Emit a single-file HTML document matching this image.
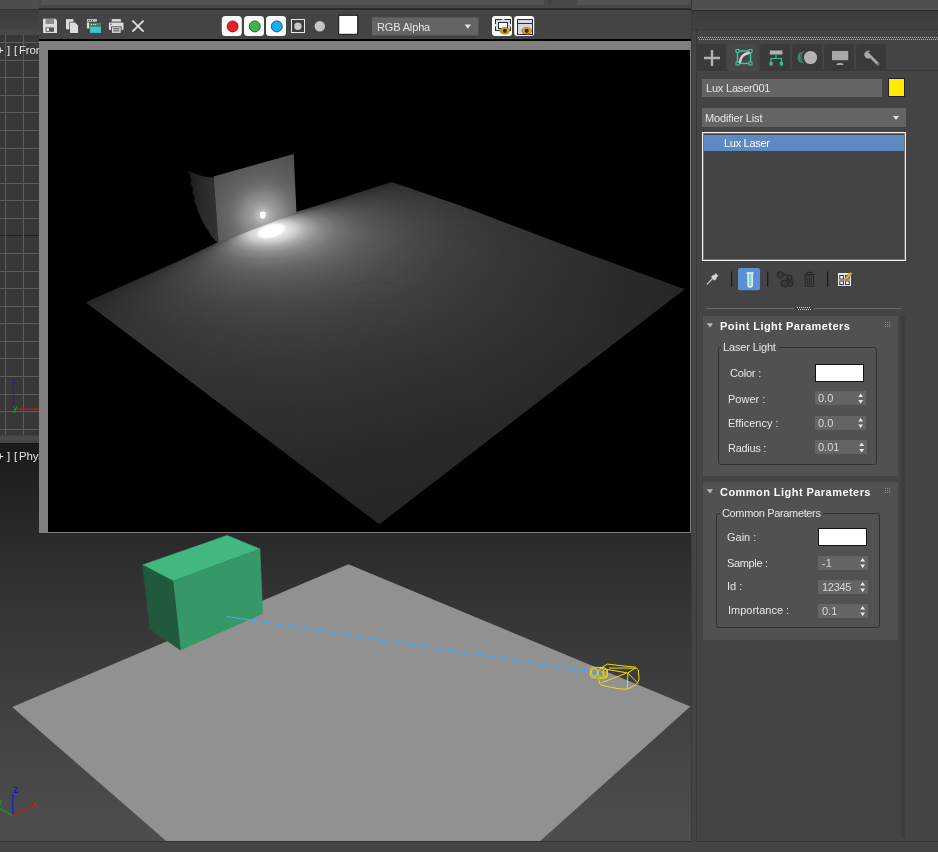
<!DOCTYPE html>
<html>
<head>
<meta charset="utf-8">
<title>Lux Laser</title>
<style>
html,body{margin:0;padding:0;}
body{width:938px;height:852px;overflow:hidden;background:#444444;position:relative;font-family:"Liberation Sans","DejaVu Sans",sans-serif;font-size:11px;color:#e6e6e6;}
.a{position:absolute;}
.t{position:absolute;white-space:nowrap;line-height:14px;height:14px;will-change:transform;}
.fld{position:absolute;background:#646464;}
.sw{position:absolute;background:#fff;border:1px solid #111;box-sizing:border-box;}
.grp{position:absolute;border:1px solid #2f2f2f;border-radius:3px;box-sizing:border-box;}
.roll{position:absolute;background:#515151;}
svg{position:absolute;overflow:visible;}
</style>
</head>
<body>

<!-- ===== top-left strip above front viewport ===== -->
<div class="a" style="left:0;top:0;width:39px;height:9px;background:#4d4d4d"></div>
<div class="a" style="left:0;top:9px;width:39px;height:1px;background:#303030"></div>
<div class="a" style="left:0;top:10px;width:39px;height:19px;background:linear-gradient(#3c3c3c,#434343)"></div>
<div class="a" style="left:0;top:29px;width:39px;height:6px;background:#484848"></div>

<!-- ===== front viewport (grid) ===== -->
<div class="a" style="left:0;top:35px;width:39px;height:400px;background:#383838;overflow:hidden">
<svg style="left:0;top:0" width="39" height="400" viewBox="0 35 39 400">
<g stroke="#5c5c5c" stroke-width="1" shape-rendering="crispEdges">
<line x1="0" y1="42.5" x2="39" y2="42.5"/>
<line x1="0" y1="60.5" x2="39" y2="60.5"/>
<line x1="0" y1="77.5" x2="39" y2="77.5"/>
<line x1="0" y1="95.5" x2="39" y2="95.5"/>
<line x1="0" y1="112.5" x2="39" y2="112.5"/>
<line x1="0" y1="130.5" x2="39" y2="130.5"/>
<line x1="0" y1="148.5" x2="39" y2="148.5"/>
<line x1="0" y1="165.5" x2="39" y2="165.5"/>
<line x1="0" y1="183.5" x2="39" y2="183.5"/>
<line x1="0" y1="200.5" x2="39" y2="200.5"/>
<line x1="0" y1="218.5" x2="39" y2="218.5"/>
<line x1="0" y1="235.5" x2="39" y2="235.5" stroke="#1c1c1c"/>
<line x1="0" y1="253.5" x2="39" y2="253.5"/>
<line x1="0" y1="271.5" x2="39" y2="271.5"/>
<line x1="0" y1="288.5" x2="39" y2="288.5"/>
<line x1="0" y1="306.5" x2="39" y2="306.5"/>
<line x1="0" y1="323.5" x2="39" y2="323.5"/>
<line x1="0" y1="341.5" x2="39" y2="341.5"/>
<line x1="0" y1="358.5" x2="39" y2="358.5"/>
<line x1="0" y1="376.5" x2="39" y2="376.5"/>
<line x1="0" y1="394.5" x2="39" y2="394.5"/>
<line x1="0" y1="411.5" x2="39" y2="411.5"/>
<line x1="0" y1="429.5" x2="39" y2="429.5"/>
<line x1="5.5" y1="35" x2="5.5" y2="435"/>
<line x1="23.5" y1="35" x2="23.5" y2="435"/>
</g>
<!-- axis tripod -->
<line x1="13.5" y1="385" x2="13.5" y2="409" stroke="#1a1ad0" stroke-width="1.2"/>
<line x1="15" y1="409" x2="39" y2="409" stroke="#c01818" stroke-width="1.2"/>
<text x="11" y="384" font-size="9" fill="#1a1ad0" font-family="Liberation Sans,sans-serif">z</text>
<text x="13" y="411" font-size="9" fill="#20a020" font-family="Liberation Sans,sans-serif">y</text>
</svg>
<div class="t" style="left:-3.2px;top:8.3px;font-size:11.5px;color:#e2e2e2">+</div>
<div class="t" style="left:6.6px;top:8.3px;font-size:11.5px;color:#e2e2e2">]</div>
<div class="t" style="left:13.8px;top:8.3px;font-size:11.5px;color:#e2e2e2">[</div>
<div class="t" style="left:18.6px;top:8.3px;font-size:11.5px;color:#e2e2e2;letter-spacing:-0.2px">Front</div>
</div>
<div class="a" style="left:0;top:435px;width:39px;height:8px;background:#444"></div>
<div class="a" style="left:0;top:437px;width:39px;height:3px;background:#4a4a4a"></div>
<!-- ===== perspective viewport ===== -->
<div class="a" id="persp" style="left:0;top:443px;width:691px;height:398px;background:linear-gradient(#191919 0,#212121 9.3%,#343434 39.4%,#3d3d3d 59.5%,#464646 79.6%,#4d4d4d 97.2%,#4e4e4e 100%);overflow:hidden">
<svg style="left:0;top:0" width="691" height="398" viewBox="0 443 691 398">
  <!-- ground plane -->
  <path d="M12.2 707 L348.4 564.2 L690.3 706.6 L540.2 841 L166.2 841 Z" fill="#919191"/>
  <!-- green box -->
  <path d="M142.5 565 L227.2 535.4 L259.9 549 L172.9 581 Z" fill="#42b87e" stroke="#42b87e" stroke-width="0.6"/>
  <path d="M172.9 581 L259.9 549 L262.7 613.4 L180.4 650 Z" fill="#369767" stroke="#369767" stroke-width="0.6"/>
  <path d="M142.5 565 L172.9 581 L180.4 650 L150 629 Z" fill="#20593c" stroke="#20593c" stroke-width="0.6"/>
  <!-- laser beam -->
  <line x1="226.5" y1="616.5" x2="601" y2="673.2" stroke="#4aa6ee" stroke-width="1.2"/>
  <!-- laser gizmo -->
  <g fill="none" stroke="#ecdc0a" stroke-width="1" stroke-linejoin="round">
    <path d="M600.5 668.3 L607.3 664.1 L622 665.8 L635.4 667.1 L638.4 670 L639 679.9 L636.3 684.5 L627.3 689.2 L619.2 688.8 L607.7 686.7 L600 684.5 L598.8 679.4"/>
    <path d="M600.5 668.3 L627.8 673 L627.3 689.2 M627.8 673 L635.4 668 M627.8 673 L638.4 683.7 M601.3 682.8 L626 673.4 M609 668 L636 668.2"/>
    <path d="M592 667.2 L604 667.6 L607.5 670 L607 677 L603 678.5 L592 677.6 L590.2 675 L590.4 669.5 Z"/>
    <ellipse cx="594.5" cy="672.5" rx="3" ry="4"/>
    <ellipse cx="601" cy="673" rx="3" ry="4.4"/>
    <ellipse cx="605" cy="673" rx="2.2" ry="3.6"/>
  </g>
  <!-- axis tripod -->
  <line x1="12.8" y1="794" x2="12.8" y2="815.6" stroke="#1414d8" stroke-width="1.1"/>
  <line x1="12.8" y1="815.6" x2="32.6" y2="806" stroke="#c41818" stroke-width="1.1"/>
  <line x1="12.8" y1="815.6" x2="0" y2="808.6" stroke="#18a018" stroke-width="1.1"/>
  <text x="13" y="793" font-size="10" font-weight="bold" fill="#1414d8" font-family="Liberation Sans,sans-serif">z</text>
  <text x="31.5" y="808" font-size="10" fill="#cc1414" font-family="Liberation Sans,sans-serif">x</text>
  <text x="-3" y="806" font-size="10" fill="#18a818" font-family="Liberation Sans,sans-serif">y</text>
</svg>
<div class="t" style="left:-3.2px;top:6.2px;font-size:11.5px;color:#e2e2e2">+</div>
<div class="t" style="left:6.6px;top:6.2px;font-size:11.5px;color:#e2e2e2">]</div>
<div class="t" style="left:13.8px;top:6.2px;font-size:11.5px;color:#e2e2e2">[</div>
<div class="t" style="left:19px;top:6.2px;font-size:11.5px;color:#e2e2e2;letter-spacing:-0.15px">Phys</div>
</div>
<div class="a" style="left:0;top:841px;width:938px;height:1px;background:#333"></div>
<!-- ===== render window ===== -->
<div class="a" id="rwin" style="left:39px;top:0;width:652px;height:533px;background:#444">
  <div class="a" style="left:0;top:0;width:652px;height:5px;background:#494949"></div>
  <div class="a" style="left:2px;top:0;width:503px;height:5px;background:#535353"></div>
  <div class="a" style="left:538.5px;top:0;width:111px;height:5px;background:#535353"></div>
  <div class="a" style="left:509px;top:0;width:4px;height:4px;background:#404040;border-radius:0 0 2px 2px"></div>
  <div class="a" style="left:0;top:5px;width:652px;height:3px;background:#484848"></div>
  <div class="a" style="left:0;top:8px;width:652px;height:2px;background:#2b2b2b"></div>
  <div class="a" style="left:0;top:39px;width:652px;height:2px;background:#000"></div>
  <!-- toolbar -->
  <svg style="left:0;top:0" width="652" height="41" viewBox="39 0 652 41">
    <!-- save -->
    <path d="M43 18.8 H55.4 L57 20.4 V32.9 H43 Z" fill="#dcdcdc"/>
    <rect x="45.6" y="18.8" width="8.4" height="5.2" fill="#8e8e8e"/>
    <rect x="45.6" y="27.4" width="8.4" height="4.4" fill="#555"/><rect x="46.6" y="28.2" width="2.4" height="2.8" fill="#f4f4f4"/>
    <!-- copy -->
    <rect x="66" y="19.1" width="7.4" height="10.2" fill="#dcdcdc"/>
    <path d="M69.4 21.8 H75.4 L78.6 25 V33.4 H69.4 Z" fill="#444"/>
    <path d="M70 22.4 H75 L78.1 25.5 V32.9 H70 Z" fill="#dcdcdc"/>
    <!-- clone window -->
    <rect x="86.9" y="19.1" width="10" height="2.6" fill="#c8c8c8"/>
    <g fill="#444"><rect x="88" y="20" width="1" height="1"/><rect x="90" y="20" width="1" height="1"/><rect x="92" y="20" width="1" height="1"/></g>
    <rect x="86.9" y="22.4" width="2.4" height="6" fill="#dcdcdc"/>
    <rect x="89.9" y="22.9" width="11.1" height="3" fill="#5a7a78"/>
    <g fill="#bfeee8"><rect x="91" y="24" width="1" height="1"/><rect x="93" y="24" width="1" height="1"/><rect x="95" y="24" width="1" height="1"/></g>
    <rect x="89.9" y="26.5" width="11.1" height="6.4" fill="#3ec8c0"/>
    <!-- print -->
    <rect x="111.7" y="19.1" width="9.2" height="2.5" fill="#dcdcdc"/>
    <rect x="108.9" y="22.5" width="14.6" height="7.4" rx="1" fill="#dcdcdc"/>
    <rect x="110.4" y="23.6" width="1.2" height="1.2" fill="#444"/>
    <rect x="111" y="26.4" width="10.6" height="7" fill="#444"/>
    <rect x="111.9" y="27.2" width="8.8" height="5.7" fill="#dcdcdc"/>
    <path d="M113.2 28.8 H119.4 M113.2 30.9 H119.4" stroke="#444" stroke-width="1"/>
    <!-- close -->
    <path d="M132.4 20.6 L143.6 31.6 M143.6 20.6 L132.4 31.6" stroke="#dcdcdc" stroke-width="2" fill="none"/>
    <!-- channel toggles -->
    <rect x="221.8" y="16" width="20" height="20" rx="3.5" fill="#fbfbfb"/>
    <circle cx="232.6" cy="26.4" r="5.5" fill="#e61e28" stroke="#5a1a1a" stroke-width="0.8"/>
    <rect x="244" y="16" width="20" height="20" rx="3.5" fill="#fbfbfb"/>
    <circle cx="254.8" cy="26.4" r="5.5" fill="#3cb44a" stroke="#1e4a22" stroke-width="0.8"/>
    <rect x="266" y="16" width="20" height="20" rx="3.5" fill="#fbfbfb"/>
    <circle cx="276.8" cy="26.4" r="5.5" fill="#12aef0" stroke="#153c5c" stroke-width="0.8"/>
    <rect x="291.5" y="19.5" width="13" height="13" fill="#3e3e3e" stroke="#e8e8e8" stroke-width="1"/>
    <circle cx="297.9" cy="26.2" r="3.7" fill="#c6c6c6"/>
    <circle cx="319.8" cy="26.2" r="5.2" fill="#c6c6c6"/>
    <rect x="338.7" y="15.3" width="19" height="19" fill="#fff" stroke="#111" stroke-width="1"/>
    <!-- channel dropdown -->
    <rect x="372" y="17.4" width="106.4" height="18" fill="#646464"/>
    <path d="M464.6 24.6 H471 L467.8 28.8 Z" fill="#e0e0e0"/>
    <!-- toggle ui buttons -->
    <rect x="492" y="16" width="20" height="20" rx="3" fill="#fdfdfd"/>
    <rect x="495.5" y="19.5" width="15" height="11" fill="#d9d9e6" stroke="#262c3a" stroke-width="1"/>
    <rect x="498.5" y="22.5" width="9" height="6" fill="#fff" stroke="#262c3a" stroke-width="1"/>
    <path d="M502 19.5 H504.5 M495.5 24 V26.5 M510.5 24 V26.5" stroke="#d9d9e6" stroke-width="1.2"/>
    <ellipse cx="504.8" cy="30.8" rx="5" ry="3.3" fill="#d9a904" stroke="#8a6a00" stroke-width="0.6"/>
    <circle cx="504.8" cy="30.8" r="2.1" fill="#3a2210"/>
    <rect x="514.2" y="16" width="20" height="20" rx="3" fill="#fdfdfd"/>
    <rect x="517.5" y="19.5" width="15" height="15" fill="#d6d6e4" stroke="#262c3a" stroke-width="1"/>
    <path d="M517.5 23.5 H532.5" stroke="#262c3a" stroke-width="1"/>
    <ellipse cx="526.7" cy="30.8" rx="5" ry="3.3" fill="#d9a904" stroke="#8a6a00" stroke-width="0.6"/>
    <circle cx="526.7" cy="30.8" r="2.1" fill="#3a2210"/>
  </svg>
  <div class="t" style="left:337.6px;top:19.5px;color:#e4e4e4;letter-spacing:-0.15px">RGB Alpha</div>

  <div class="a" style="left:0;top:41px;width:652px;height:492px;background:#808080"></div>
  <div class="a" id="rimg" style="left:9px;top:50px;width:642px;height:482px;background:#000;overflow:hidden">
    <!-- floor: perspective-mapped radial falloff, clipped by curved outline -->
    <div class="a" style="left:0;top:0;width:642px;height:482px;clip-path:path('M37.6 252.2 L132 210.6 L171.5 191.3 L248.5 161.8 L292 148.4 L343.8 132 L412 155.4 L532 200.9 L636.6 239.3 L331.3 474.2 Z')">
      <div class="a" style="left:0;top:0;width:1400px;height:1400px;transform-origin:0 0;transform:matrix3d(0.42694925,-0.074657539,0,0.00034815343, 0.18507038,0.065832112,0,-0.0003309408, 0,0,1,0, -84.674488,254.83329,0,1);background:radial-gradient(circle at 729px 211px,rgba(252,252,252,1) 0px,rgba(248,248,248,1) 14px,rgba(238,238,238,1) 26px,rgba(228,228,228,1) 40px,rgba(220,220,220,1) 50px,rgba(213,213,213,1) 58px,rgba(203,203,203,0.95) 68px,rgba(187,187,187,0.85) 80px,rgba(165,165,165,0.62) 100px,rgba(141,141,141,0.36) 130px,rgba(121,121,121,0.13) 170px,rgba(106,106,106,0) 215px),conic-gradient(from 90deg at 729px 166px,rgba(0,0,0,0.600) 0deg,rgba(0,0,0,0.446) 3deg,rgba(0,0,0,0.363) 6deg,rgba(0,0,0,0.295) 10deg,rgba(0,0,0,0.237) 15deg,rgba(0,0,0,0.178) 22deg,rgba(0,0,0,0.129) 30deg,rgba(0,0,0,0.067) 45deg,rgba(0,0,0,0.028) 60deg,rgba(0,0,0,0.000) 90deg,rgba(0,0,0,0.028) 120deg,rgba(0,0,0,0.067) 135deg,rgba(0,0,0,0.129) 150deg,rgba(0,0,0,0.178) 158deg,rgba(0,0,0,0.237) 165deg,rgba(0,0,0,0.295) 170deg,rgba(0,0,0,0.363) 174deg,rgba(0,0,0,0.446) 177deg,rgba(0,0,0,0.600) 180deg,rgba(0,0,0,.6) 360deg),radial-gradient(circle at 729px 211px,#ffffff 0px,#ffffff 30px,#fafafa 42px,#ececec 50px,#dedede 58px,#cdcdcd 68px,#bbbbbb 80px,#a5a5a5 100px,#8d8d8d 130px,#797979 170px,#686868 220px,#595959 290px,#4c4c4c 380px,#414141 500px,#383838 650px,#313131 800px,#2b2b2b 950px,#272727 1100px,#232323 1400px)"></div>
    </div>
    <svg style="left:0;top:0" width="642" height="482" viewBox="48 50 642 482">
      <defs>
        <radialGradient id="hs"><stop offset="0" stop-color="#fff"/><stop offset="0.72" stop-color="#fff"/><stop offset="1" stop-color="#fff" stop-opacity="0"/></radialGradient>
        <linearGradient id="ds" gradientUnits="userSpaceOnUse" x1="188" y1="0" x2="218" y2="0"><stop offset="0" stop-color="#1a1a1a"/><stop offset="0.5" stop-color="#2a2a2a"/><stop offset="1" stop-color="#333333"/></linearGradient>
        <radialGradient id="bx" gradientUnits="userSpaceOnUse" cx="263" cy="215.5" r="100">
          <stop offset="0.000" stop-color="#c6c6c6"/>
          <stop offset="0.040" stop-color="#bcbcbc"/>
          <stop offset="0.080" stop-color="#aaaaaa"/>
          <stop offset="0.110" stop-color="#9e9e9e"/>
          <stop offset="0.150" stop-color="#939393"/>
          <stop offset="0.200" stop-color="#898989"/>
          <stop offset="0.270" stop-color="#767676"/>
          <stop offset="0.350" stop-color="#676767"/>
          <stop offset="0.450" stop-color="#5d5d5d"/>
          <stop offset="0.600" stop-color="#535353"/>
          <stop offset="0.800" stop-color="#484848"/>
          <stop offset="1.000" stop-color="#404040"/>
        </radialGradient>
      </defs>
      <ellipse cx="271.2" cy="231" rx="16" ry="7.4" transform="rotate(-16 271.2 231)" fill="url(#hs)"/>
      <g fill="none" stroke="#000" stroke-opacity="0.045" stroke-width="2.2"><path d="M352 286 Q373 277 394 285"/><path d="M357 300 Q373 306 389 300"/><path d="M350 309 Q373 318 398 308" stroke-opacity="0.025"/></g>
      <!-- box dark side (jagged) -->
      <path d="M187.5 172 L188.6 170.6 L189.4 172.4 L190.6 171 L191.4 173.2 L193 172.4 L196 174.2 L204 176.4 L213.5 178 L218.9 242.8 L215.5 241 L211 235.6 L207.6 229.8 L204.2 224.6 L201 218 L198.2 212 L196.6 206 L194 201.6 L194.6 196.4 L192.4 192.6 L193 188.4 L190.8 184 L191.4 179.6 L189.6 176.6 L190.4 174.6 Z" fill="url(#ds)"/>
      <!-- box front -->
      <path d="M213.5 176.6 L293.7 154 L296.5 213 L218.6 242.8 Z" fill="url(#bx)"/>
      <!-- laser spot -->
      <path d="M260 212.5 L262 211.5 L265.5 212 L265.8 216 L264 218.5 L261 218.5 L260 216.5 Z" fill="#fff"/>
    </svg>
  </div>
</div>
<!-- ===== command panel ===== -->
<div class="a" id="cmd" style="left:691px;top:0;width:247px;height:852px;background:#444">
  <!-- top bands -->
  <div class="a" style="left:0;top:0;width:247px;height:10px;background:#4f4f4f"></div>
  <div class="a" style="left:0;top:10px;width:247px;height:1px;background:#2e2e2e"></div>
  <div class="a" style="left:0;top:11px;width:247px;height:18px;background:linear-gradient(#3b3b3b,#424242)"></div>
  <div class="a" style="left:0;top:29px;width:247px;height:1px;background:#3a3a3a"></div>
  <div class="a" style="left:0;top:0;width:1px;height:841px;background:#3a3a3a"></div>
  <div class="a" style="left:5px;top:30px;width:1px;height:811px;background:#383838"></div>
  <div class="a" style="left:5px;top:841px;width:242px;height:1.4px;background:#363636"></div>
  <!-- dotted grip -->
  <svg style="left:6px;top:36px" width="241" height="5" viewBox="0 0 241 5">
    <line x1="1" y1="1.5" x2="241" y2="1.5" stroke="#b8b8b8" stroke-width="1" stroke-dasharray="1 1" shape-rendering="crispEdges"/>
    <line x1="2" y1="3.5" x2="241" y2="3.5" stroke="#b8b8b8" stroke-width="1" stroke-dasharray="1 1" shape-rendering="crispEdges"/>
  </svg>
  <!-- tabs -->
  <div class="a" style="left:5px;top:70px;width:242px;height:1px;background:#3a3a3a"></div>
  <div class="a" style="left:5px;top:44px;width:30px;height:26px;background:#3a3a3a;border-radius:4px 4px 0 0"></div>
  <div class="a" style="left:37px;top:44px;width:30px;height:27px;background:#484848;border-radius:4px 4px 0 0"></div>
  <div class="a" style="left:69px;top:44px;width:30px;height:26px;background:#3a3a3a;border-radius:4px 4px 0 0"></div>
  <div class="a" style="left:101px;top:44px;width:30px;height:26px;background:#3a3a3a;border-radius:4px 4px 0 0"></div>
  <div class="a" style="left:133px;top:44px;width:30px;height:26px;background:#3a3a3a;border-radius:4px 4px 0 0"></div>
  <div class="a" style="left:165px;top:44px;width:30px;height:26px;background:#3a3a3a;border-radius:4px 4px 0 0"></div>
  <svg style="left:0;top:0" width="247" height="80" viewBox="691 0 247 80">
    <!-- create (+) -->
    <path d="M704 58 H720 M712 50 V66" stroke="#b2b2b2" stroke-width="2.4" fill="none"/>
    <!-- modify -->
    <rect x="737.5" y="51" width="13" height="12.5" fill="none" stroke="#3fcaa6" stroke-width="1.4"/>
    <g fill="#444" stroke="#3fcaa6" stroke-width="1">
      <rect x="736" y="49.5" width="3" height="3"/><rect x="749" y="49.5" width="3" height="3"/>
      <rect x="736" y="62" width="3" height="3"/><rect x="749" y="62" width="3" height="3"/>
    </g>
    <path d="M740 61.8 Q741 54.5 748.6 53" stroke="#d6d6d6" stroke-width="2.4" fill="none" stroke-linecap="round"/>
    <!-- hierarchy -->
    <rect x="769.8" y="50.5" width="12.6" height="4" fill="#b2b2b2"/>
    <path d="M776 54.5 V58.5 M771 62 V58.5 H781.5 V62" stroke="#3fb898" stroke-width="1.2" fill="none"/>
    <rect x="769.5" y="62" width="3.2" height="3.5" fill="#3fb898"/><rect x="779.8" y="62" width="3.2" height="3.5" fill="#3fb898"/>
    <!-- motion -->
    <g fill="none" stroke="#3a9c84" stroke-width="1">
      <path d="M803.5 51.5 A8 8 0 0 0 803.5 63.5"/><path d="M801.5 52 A8 8 0 0 0 801.5 63"/><path d="M799.8 53 A7 7 0 0 0 799.8 62"/>
    </g>
    <circle cx="810.5" cy="57.5" r="6.6" fill="#b4b4b4"/>
    <!-- display -->
    <rect x="832" y="51" width="16.2" height="9.2" fill="#a8a8a8"/>
    <path d="M836 65 L838 63 H842 L843.8 65 Z" fill="#a8a8a8"/>
    <!-- utilities (wrench) -->
    <path d="M868.5 54.5 L878 64" stroke="#a8a8a8" stroke-width="2.8" stroke-linecap="round" fill="none"/>
    <path d="M870.5 51.2 A4 4 0 1 0 871.8 56.5 L869 54.6 L868.2 52 Z" fill="#a8a8a8"/>
    <circle cx="878" cy="64" r="0.8" fill="#3a3a3a"/>
  </svg>
  <!-- name field + colour swatch -->
  <div class="fld" style="left:11px;top:79px;width:180px;height:18px"></div>
  <div class="t" style="left:15.4px;top:81px;letter-spacing:-0.2px">Lux Laser001</div>
  <div class="a" style="left:197.2px;top:78px;width:16.6px;height:19.4px;background:#ffec00;border:1px solid #222;box-sizing:border-box"></div>
  <!-- modifier list -->
  <div class="fld" style="left:11px;top:108px;width:204px;height:19px"></div>
  <div class="t" style="left:13.5px;top:110.5px;letter-spacing:-0.15px">Modifier List</div>
  <svg style="left:201px;top:115px" width="8" height="6" viewBox="0 0 8 6"><path d="M1 1 H7 L4 5 Z" fill="#e0e0e0"/></svg>
  <!-- stack list -->
  <div class="a" style="left:11px;top:132px;width:204.4px;height:129px;border:1px solid #f0f0f0;outline:1px solid rgba(255,255,255,.25);outline-offset:-2px;box-sizing:border-box;background:#444"></div>
  <div class="a" style="left:13px;top:134.5px;width:200.4px;height:16px;background:#5e8ac4"></div>
  <div class="t" style="left:33.4px;top:135.5px;color:#fff;letter-spacing:-0.3px">Lux Laser</div>
  <!-- stack tool row -->
  <svg style="left:0;top:260px" width="247" height="56" viewBox="691 260 247 56">
    <!-- pin -->
    <path d="M707 284.3 L712.5 278.6" stroke="#d2d2d2" stroke-width="1.2" fill="none"/>
    <path d="M711.2 277.2 L714.2 280.4 L716 279.6 L717.2 276.4 L718.6 276.2 L715.6 273 L715.2 274.4 L712.2 275.6 Z" fill="#d2d2d2"/>
    <!-- separators -->
    <g stroke="#1c1c1c" stroke-width="1.3"><path d="M731.6 271.4 V286.8 M767.7 271.4 V286.8 M827.6 271.4 V286.8"/></g>
    <!-- show end result (active) -->
    <rect x="738" y="268" width="22" height="22.2" rx="2" fill="#5b8fd6"/>
    <path d="M746.6 273 H753.6 M748 273.4 V285 Q748 287 750.1 287 Q752.2 287 752.2 285 V273.4" stroke="#f4f4f4" stroke-width="1.3" fill="#7cd6c6"/>
    <!-- make unique (disabled) -->
    <g fill="#3a3a3a" stroke="#2a2a2a" stroke-width="1.2">
      <path d="M783.3 274.8 H787.4 M789.4 280.2 V282" fill="none"/>
      <circle cx="780.3" cy="274.8" r="3"/><circle cx="789.4" cy="277.6" r="2.6"/>
      <circle cx="784.6" cy="283.4" r="3.3"/><circle cx="790.2" cy="283.6" r="2.7"/>
    </g>
    <!-- trash (disabled) -->
    <g fill="none" stroke="#2b2b2b" stroke-width="1.1">
      <path d="M804 274.5 H814.8 M807 274.3 V272.4 H811.8 V274.3"/>
      <path d="M805.2 276 H813.6 V286.4 H805.2 Z M807.4 277.5 V285 M809.4 277.5 V285 M811.4 277.5 V285"/>
    </g>
    <!-- configure modifier sets -->
    <rect x="838" y="273" width="13" height="13" fill="#ececec"/>
    <g fill="#fff" stroke="#2e2e2e" stroke-width="1"><rect x="839.8" y="275.4" width="3.6" height="3.6"/><rect x="845.6" y="275.4" width="3.6" height="3.6"/><rect x="839.8" y="281" width="3.6" height="3.6"/><rect x="845.6" y="281" width="3.6" height="3.6"/></g>
    <path d="M844.4 280.4 L845.2 277.6 L850.4 272 L852.4 273.8 L847.2 279.4 Z" fill="#f0a818" stroke="#444" stroke-width="0.4"/>
    <!-- divider with grip -->
    <path d="M706 308.5 H793.5 M814 308.5 H901" stroke="#6a6a6a" stroke-width="1" shape-rendering="crispEdges"/>
    <path d="M797 307.5 H811" stroke="#d0d0d0" stroke-width="1" stroke-dasharray="1 1" shape-rendering="crispEdges"/>
    <path d="M798 309.5 H811" stroke="#d0d0d0" stroke-width="1" stroke-dasharray="1 1" shape-rendering="crispEdges"/>
  </svg>
  <!-- scroll strip -->
  <div class="a" style="left:210.2px;top:316px;width:4px;height:522px;background:#3d3d3d;border-radius:2px"></div>
</div>
<!-- ===== rollouts ===== -->
<div class="a" style="left:691px;top:0;width:247px;height:852px">
  <!-- Point Light Parameters -->
  <div class="roll" style="left:12px;top:316px;width:195px;height:160px"></div>
  <svg style="left:15px;top:322px" width="8" height="7" viewBox="0 0 8 7"><path d="M0.8 1.2 H7 L3.9 5.6 Z" fill="#b8b8b8"/></svg>
  <div class="t" style="left:28.6px;top:319px;font-weight:bold;color:#fafafa;letter-spacing:0.45px">Point Light Parameters</div>
  <svg style="left:193.5px;top:322px" width="7" height="7" viewBox="0 0 7 7"><g fill="#8a8a8a"><rect x="0" y="0" width="1" height="1"/><rect x="2" y="0" width="1" height="1"/><rect x="4" y="0" width="1" height="1"/><rect x="0" y="2" width="1" height="1"/><rect x="2" y="2" width="1" height="1"/><rect x="4" y="2" width="1" height="1"/><rect x="0" y="4" width="1" height="1"/><rect x="2" y="4" width="1" height="1"/><rect x="4" y="4" width="1" height="1"/></g></svg>
  <div class="grp" style="left:27px;top:347px;width:159px;height:118px"></div>
  <div class="t" style="left:30px;top:340px;background:#515151;padding:0 2px;letter-spacing:-0.15px">Laser Light</div>
  <div class="t" style="left:38.7px;top:366.3px;letter-spacing:-0.2px">Color :</div>
  <div class="sw" style="left:124px;top:364px;width:49px;height:18px"></div>
  <div class="t" style="left:37.4px;top:392px">Power :</div>
  <div class="fld" style="left:124px;top:391px;width:51px;height:14.4px"></div>
  <div class="t" style="left:126.8px;top:391.4px;color:#d8d8d8">0.0</div>
  <div class="t" style="left:37.4px;top:416px">Efficency :</div>
  <div class="fld" style="left:124px;top:416px;width:51px;height:14px"></div>
  <div class="t" style="left:126.8px;top:416px;color:#d8d8d8">0.0</div>
  <div class="t" style="left:37.4px;top:441px;letter-spacing:-0.3px">Radius :</div>
  <div class="fld" style="left:124px;top:440px;width:52px;height:14.4px"></div>
  <div class="t" style="left:126.8px;top:440.4px;color:#d8d8d8">0.01</div>

  <!-- Common Light Parameters -->
  <div class="roll" style="left:12px;top:482px;width:195px;height:158px"></div>
  <svg style="left:15px;top:487.5px" width="8" height="7" viewBox="0 0 8 7"><path d="M0.8 1.2 H7 L3.9 5.6 Z" fill="#b8b8b8"/></svg>
  <div class="t" style="left:28.6px;top:485px;font-weight:bold;color:#fafafa;letter-spacing:0.45px">Common Light Parameters</div>
  <svg style="left:193.5px;top:488.2px" width="7" height="7" viewBox="0 0 7 7"><g fill="#8a8a8a"><rect x="0" y="0" width="1" height="1"/><rect x="2" y="0" width="1" height="1"/><rect x="4" y="0" width="1" height="1"/><rect x="0" y="2" width="1" height="1"/><rect x="2" y="2" width="1" height="1"/><rect x="4" y="2" width="1" height="1"/><rect x="0" y="4" width="1" height="1"/><rect x="2" y="4" width="1" height="1"/><rect x="4" y="4" width="1" height="1"/></g></svg>
  <div class="grp" style="left:25px;top:513px;width:164px;height:115px"></div>
  <div class="t" style="left:28.5px;top:506px;background:#515151;padding:0 2px;letter-spacing:-0.35px">Common Parameters</div>
  <div class="t" style="left:35.5px;top:530.4px">Gain :</div>
  <div class="sw" style="left:127px;top:528px;width:49px;height:18.4px"></div>
  <div class="t" style="left:35.5px;top:556px;letter-spacing:-0.35px">Sample :</div>
  <div class="fld" style="left:127px;top:556px;width:50px;height:14px"></div>
  <div class="t" style="left:131px;top:556px;color:#d8d8d8">-1</div>
  <div class="t" style="left:36px;top:579.4px">Id :</div>
  <div class="fld" style="left:127px;top:580px;width:50px;height:14px"></div>
  <div class="t" style="left:130.5px;top:580px;color:#d8d8d8;letter-spacing:-0.3px">12345</div>
  <div class="t" style="left:36.6px;top:603.2px">Importance :</div>
  <div class="fld" style="left:127px;top:604px;width:50px;height:14px"></div>
  <div class="t" style="left:130.5px;top:604px;color:#d8d8d8">0.1</div>
  <!-- spinner arrows -->
  <svg style="left:0;top:0" width="247" height="852" viewBox="691 0 247 852">
    <g fill="#e6e6e6">
      <path d="M858.3 397 L860.7 393.6 L863.1 397 Z M858.3 400 L860.7 403.4 L863.1 400 Z"/>
      <path d="M858.3 421.5 L860.7 418.1 L863.1 421.5 Z M858.3 424.5 L860.7 427.9 L863.1 424.5 Z"/>
      <path d="M859.3 446 L861.7 442.6 L864.1 446 Z M859.3 449 L861.7 452.4 L864.1 449 Z"/>
      <path d="M860.3 561.5 L862.7 558.1 L865.1 561.5 Z M860.3 564.5 L862.7 567.9 L865.1 564.5 Z"/>
      <path d="M860.3 585.5 L862.7 582.1 L865.1 585.5 Z M860.3 588.5 L862.7 591.9 L865.1 588.5 Z"/>
      <path d="M860.3 609.5 L862.7 606.1 L865.1 609.5 Z M860.3 612.5 L862.7 615.9 L865.1 612.5 Z"/>
    </g>
  </svg>
</div>
</body>
</html>
